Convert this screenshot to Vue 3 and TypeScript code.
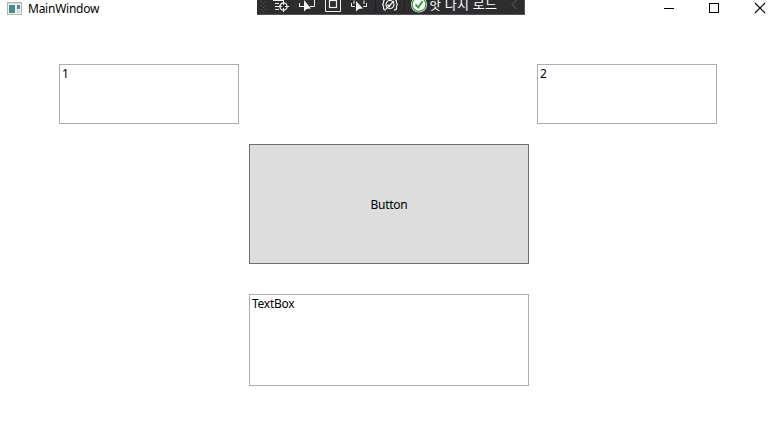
<script setup lang="ts">
import { ref } from 'vue'

const first = ref('1')
const second = ref('2')
const result = ref('TextBox')
</script>

<template>
  <div class="window">
    <header class="titlebar">
      <svg class="app-icon" width="15" height="13" viewBox="0 0 15 13">
        <defs>
          <linearGradient id="pane" x1="0" y1="0" x2="1" y2="1">
            <stop offset="0" stop-color="#4a78b0" />
            <stop offset="1" stop-color="#43a06c" />
          </linearGradient>
        </defs>
        <rect x=".5" y=".5" width="14" height="12" fill="#f4f4f4" stroke="#b0b2b4" />
        <path d="M1 1.5H14" stroke="#d5d7d9" />
        <rect x="2" y="3" width="6" height="8" fill="url(#pane)" />
        <rect x="10" y="3" width="3" height="4" fill="url(#pane)" />
        <rect x="10" y="8" width="3" height="3" fill="#d4d6d8" />
      </svg>
      <span class="title">MainWindow</span>
      <div class="controls">
        <svg width="46" height="17" viewBox="0 0 46 17"><path d="M19 8.5H29" stroke="#000" /></svg>
        <svg width="45" height="17" viewBox="0 0 45 17"><rect x="18.5" y="3.5" width="9" height="9" fill="none" stroke="#000" /></svg>
        <svg width="46" height="17" viewBox="0 0 46 17"><path d="M19 3L29 13M29 3L19 13" stroke="#000" stroke-width="1.1" /></svg>
      </div>
    </header>

    <div class="debugbar">
      <svg class="grip" width="8" height="14" viewBox="0 0 8 14" fill="#555558">
        <path d="M0 1h1v1H0zM4 1h1v1H4zM2 3h1v1H2zM0 5h1v1H0zM4 5h1v1H4zM2 7h1v1H2zM0 9h1v1H0zM4 9h1v1H4zM2 11h1v1H2z" />
      </svg>
      <svg class="tool" width="16" height="14" viewBox="0 0 16 14" fill="none" stroke="#f1f1f1">
        <path d="M0 .5H11M2 3.5H6M2 6.5H5M2 9.5H6" />
        <circle cx="10.5" cy="6.5" r="3.6" stroke-width="1.3" />
        <path d="M10.5 1V5M10.5 8V12M5 6.5H9M12 6.5H16" />
      </svg>
      <svg class="tool" width="16" height="14" viewBox="0 0 16 14">
        <path d="M15.5 0V6.5H11M0 6.5H5M.5 6V3" fill="none" stroke="#f1f1f1" />
        <path d="M5 0V11.5L7.700 9L12 8.500Z" fill="#f1f1f1" />
      </svg>
      <svg class="tool" width="16" height="14" viewBox="0 0 16 14" fill="none" stroke="#f1f1f1">
        <path d="M.5 0V11.5H15.5V0" />
        <rect x="4.5" y=".5" width="7" height="7" stroke-width="1.2" />
      </svg>
      <svg class="tool" width="16" height="14" viewBox="0 0 16 14">
        <path d="M.5 3V6.5H4M12 6.5H15.5V3M3 .5V4M13 .5V4" fill="none" stroke="#f1f1f1" />
        <path d="M5 1V11.500L7.700 9L12 8.500Z" fill="#f1f1f1" />
      </svg>
      <i class="sep"></i>
      <svg class="tool braces" width="16" height="14" viewBox="0 0 16 14" fill="none" stroke="#f1f1f1" stroke-width="1.2">
        <path d="M3 0Q1.5 0 1.5 2V3L.5 4.5L1.5 6V8Q1.5 10 4 10M13 0Q14.5 0 14.5 2V3L15.5 4.5L14.5 6V8Q14.5 10 12 10" />
        <circle cx="8" cy="4.5" r="4" />
        <path d="M5.5 4.5L7.3 6.5L10.5 2M4 9L12 1" />
      </svg>
      <i class="sep"></i>
      <svg class="ok" width="16" height="14" viewBox="0 0 16 14">
        <circle cx="8" cy="4.5" r="8" fill="#f1f1f1" />
        <circle cx="8" cy="4.5" r="6.8" fill="#fff" stroke="#339b3d" stroke-width="1.2" />
        <path d="M4.5 4.500L7.300 7.500L11.500 1" fill="none" stroke="#339b3d" stroke-width="2" />
      </svg>
      <span class="reload">핫 다시 로드</span>
      <svg class="chevron" width="7" height="14" viewBox="0 0 7 14"><path d="M5.5 0L1 4.500L5.500 9" fill="none" stroke="#68686b" /></svg>
    </div>

    <main class="content">
      <div class="inputs">
        <textarea v-model="first" class="box small" spellcheck="false"></textarea>
        <textarea v-model="second" class="box small" spellcheck="false"></textarea>
      </div>
      <button class="action" type="button">Button</button>
      <textarea v-model="result" class="box large" spellcheck="false"></textarea>
    </main>
  </div>
</template>

<style>
body {
  margin: 0;
  background: #fff;
}
</style>

<style scoped>
.window {
  position: relative;
  width: 782px;
  height: 432px;
  overflow: hidden;
  background: #fff;
  color: #000;
  font: 12px/16px "Noto Sans", "Noto Sans CJK KR", sans-serif;
}
svg {
  display: block;
  flex: none;
}
.titlebar {
  display: flex;
  height: 17px;
}
.app-icon {
  margin: 2px 6px 0 7px;
}
.title {
  padding-top: 1px;
  letter-spacing: -0.25px;
}
.controls {
  display: flex;
  margin-left: auto;
}
.debugbar {
  position: absolute;
  left: 257px;
  top: 0;
  box-sizing: border-box;
  display: flex;
  width: 268px;
  height: 15px;
  overflow: hidden;
  background: #2d2d30;
  border: solid #555558;
  border-width: 0 1px 1px 0;
}
.grip {
  margin: 0 4px;
}
.tool {
  margin-right: 10px;
}
.tool + .sep {
  margin-left: -2px;
}
.sep {
  flex: none;
  width: 1px;
  height: 11px;
  margin-right: 6px;
  background: #222224;
}
.braces {
  margin-right: 8px;
}
.ok {
  margin-right: 2px;
}
.reload {
  width: 82px;
  flex: none;
  margin-top: -5px;
  color: #fff;
  font: 13px/17px "Noto Sans CJK KR", sans-serif;
  letter-spacing: 0.4px;
  white-space: nowrap;
}
.content {
  display: flex;
  flex-direction: column;
  align-items: center;
  width: 778px;
  padding-top: 47px;
}
.inputs {
  display: flex;
  justify-content: space-between;
  width: 658px;
  margin: 0 2px 20px 0;
}
.box {
  box-sizing: border-box;
  display: block;
  margin: 0;
  padding: 1px 2px;
  border: 1px solid #abadb3;
  border-radius: 0;
  outline: 0;
  resize: none;
  overflow: hidden;
  background: #fff;
  color: #000;
  font: inherit;
  letter-spacing: -0.25px;
}
.small {
  width: 180px;
  height: 60px;
}
.large {
  width: 280px;
  height: 92px;
}
.action {
  width: 280px;
  height: 120px;
  margin: 0 0 30px;
  padding: 2px 0 0;
  border: 1px solid #707070;
  border-radius: 0;
  background: #ddd;
  color: #000;
  font: inherit;
  letter-spacing: -0.25px;
}
</style>
